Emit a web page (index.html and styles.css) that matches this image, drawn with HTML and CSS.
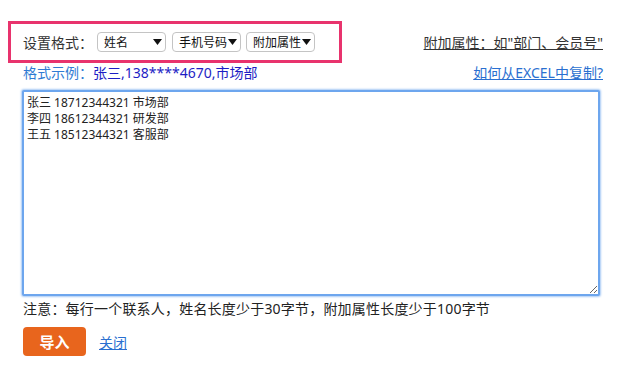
FILE: index.html
```html
<!DOCTYPE html>
<html lang="zh-CN">
<head>
    <meta charset="UTF-8">
    <title>导入联系人</title>
    <link rel="stylesheet" href="styles.css">
</head>
<body>

    <div class="import-panel">
        <div class="top-row">
            <div class="format-box">
                <span class="format-label">设置格式：</span>
                <span class="fake-select sel-name">姓名<svg class="arrow" width="9" height="6" viewBox="0 0 9 6"><path d="M0 0h9L4.5 6z"/></svg></span>
                <span class="fake-select">手机号码<svg class="arrow" width="9" height="6" viewBox="0 0 9 6"><path d="M0 0h9L4.5 6z"/></svg></span>
                <span class="fake-select">附加属性<svg class="arrow" width="9" height="6" viewBox="0 0 9 6"><path d="M0 0h9L4.5 6z"/></svg></span>
            </div>
            <a href="#" class="attr-tip">附加属性：如"部门、会员号"</a>
        </div>

        <div class="example-row">
            <span class="example">
                <span class="example-label">格式示例：</span><span class="example-value">张三,138****4670,市场部</span>
            </span>
            <a href="#" class="help-link">如何从EXCEL中复制?</a>
        </div>

        <!-- 联系人输入区 -->
        <textarea class="contact-input">张三 18712344321 市场部
李四 18612344321 研发部
王五 18512344321 客服部</textarea>

        <p class="notice">注意：每行一个联系人，姓名长度少于30字节，附加属性长度少于100字节</p>

        <div class="actions">
            <button class="import-btn">导入</button>
            <a href="#" class="close-link">关闭</a>
        </div>
    </div>

</body>
</html>
```

FILE: styles.css
```css
body {
    margin: 0;
    background-color: #fff;
    color: #333;
    font-family: "Noto Sans", "Noto Sans CJK SC", sans-serif;
}

.import-panel {
    width: 580px;
    padding: 21px 0 0 23px;
}

.top-row, .example-row {
    display: flex;
    align-items: center;
    justify-content: space-between;
}

.format-box {
    box-sizing: border-box;
    width: 334px;
    height: 42px;
    margin-left: -15px;
    padding-left: 12px;
    border: 3px solid #e8336d;
    display: flex;
    align-items: center;
}

.format-label {
    font-size: 14px;
    color: #333;
    width: 74px;
}

.fake-select {
    box-sizing: border-box;
    height: 20px;
    padding: 0 3px 0 6px;
    margin-right: 5px;
    border: 1px solid #c4c4c4;
    border-radius: 4px;
    background-color: #fff;
    display: flex;
    align-items: center;
    justify-content: space-between;
    font-size: 12px;
    color: #111;
}

.fake-select .arrow {
    margin-left: 1px;
    fill: #111;
}

.sel-name {
    width: 69px;
    margin-right: 6px;
}

.attr-tip {
    font-size: 14px;
    color: #333;
    text-decoration: underline;
}

.example-row {
    height: 18px;
}

.example {
    font-size: 14px;
}

.example-label {
    color: #2f7bd3;
}

.example-value {
    color: #1d1dc4;
}

.help-link {
    font-size: 14px;
    color: #2a6fd0;
}

.contact-input {
    box-sizing: border-box;
    display: block;
    width: 578px;
    height: 206px;
    margin: 9px 0 0 -1px;
    padding: 3px 3px;
    border: 2px solid #6da6ee;
    border-radius: 2px;
    box-shadow: 0 0 2px 1px #a9cbf5;
    outline: none;
    resize: vertical;
    font-family: "Noto Sans", "Noto Sans CJK SC", sans-serif;
    font-size: 12px;
    line-height: 16px;
    color: #222;
}

.notice {
    margin: 4px 0 0;
    font-size: 14px;
    line-height: 18px;
    letter-spacing: 0.2px;
    color: #222;
}

.actions {
    margin-top: 9px;
    display: flex;
    align-items: center;
}

.import-btn {
    width: 63px;
    height: 29px;
    border: none;
    border-radius: 4px;
    background-color: #e8651d;
    color: #fff;
    font-family: "Noto Sans CJK SC", sans-serif;
    font-size: 15px;
    font-weight: bold;
    cursor: pointer;
}

.close-link {
    margin-left: 13px;
    font-size: 14px;
    color: #2a6fd0;
}
```
